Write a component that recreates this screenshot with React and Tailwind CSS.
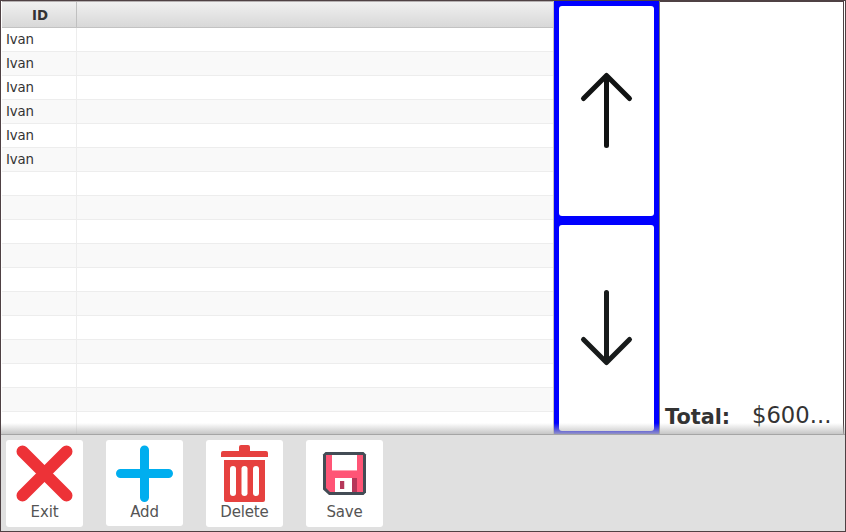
const rows = ['Ivan', 'Ivan', 'Ivan', 'Ivan', 'Ivan', 'Ivan', '', '', '', '', '', '', '', '', '', '', ''];

function Table() {
  return (
    <div className="flex h-full w-[553px] shrink-0 flex-col overflow-hidden border-r border-[#c0c0c0] pl-px">
      <div className="flex h-[27px] shrink-0 border-t border-b border-t-[#b5b0b1] border-b-[#c2c2c2] bg-gradient-to-b from-[#f0f0f0] to-[#d8d8d8] font-bold">
        <div className="flex w-[75px] items-center justify-center border-r border-[#c0c0c0] pt-[3px] pl-[2px] text-[13.33px]">ID</div>
        <div className="flex-1" />
      </div>
      {rows.map((name, i) => (
        <div key={i} className="flex h-6 shrink-0 border-b border-[#ededed] odd:bg-[#f9f9f9] even:bg-white">
          <div className="flex w-[75px] items-center border-r border-[#ededed] pl-1 text-[13.33px] tracking-[-0.2px]">{name}</div>
        </div>
      ))}
    </div>
  );
}

function Tool({ label, children, className = 'h-[87px]' }) {
  return (
    <button className={'flex w-[77px] flex-col items-center rounded-[3px] bg-white pt-[5px] text-[#555] ' + className}>
      {children}
      <span className="mt-px text-[15px] leading-[18px] tracking-[-0.15px]">{label}</span>
    </button>
  );
}

export default function App() {
  return (
    <div className="flex h-[532px] w-[846px] flex-col overflow-hidden border border-[#4f4144] bg-[#e0e0e0] font-['DejaVu_Sans',sans-serif] text-[#333]">
      <div className="relative flex h-[434px] shrink-0 border-b border-[#a5a5a5] bg-white">
        <Table />
        <div className="flex w-[106px] shrink-0 flex-col gap-[9px] border-r border-[#777] bg-[#0000ff] pt-[5px] pr-[5px] pb-[2px] pl-[5px]">
          <button className="h-[210px] w-[95px] shrink-0 rounded-[3px] bg-white">
            <svg width="95" height="210" fill="none" stroke="#111313" strokeWidth="5" strokeLinecap="round">
              <path d="M47.500 139.500V70M24.500 92.500L47.500 69.500L70.500 92.500" strokeLinejoin="round" />
            </svg>
          </button>
          <button className="h-[206px] w-[95px] shrink-0 rounded-[3px] bg-white">
            <svg width="95" height="206" fill="none" stroke="#181b1b" strokeWidth="5" strokeLinecap="round">
              <path d="M47.500 67.500V137M24.500 114.500L47.500 137.500L70.500 114.500" strokeLinejoin="round" />
            </svg>
          </button>
        </div>
        <div className="flex w-[184px] items-end border-t border-r border-[#4f4144] pb-[5px] pl-[5px]">
          <span className="w-[87px] text-[20.8px] leading-6 font-bold">Total:</span>
          <span className="text-[22.7px] leading-7">$600...</span>
        </div>
        <div className="w-px bg-white" />
        <div className="pointer-events-none absolute inset-x-0 bottom-0 h-[11px] bg-gradient-to-b from-transparent to-[#b8b8b8]/80" />
      </div>
      <div className="flex h-24 items-start gap-[23px] pt-[5px] pl-[5px]">
        <Tool label="Exit">
          <svg width="57" height="57" viewBox="0 0 57 57" stroke="#ed3237" strokeWidth="12" strokeLinecap="round">
            <path d="M6.500 6.500L50.500 50.500M50.500 6.500L6.500 50.500" />
          </svg>
        </Tool>
        <Tool label="Add" className="h-[86px]">
          <svg width="57" height="57" viewBox="0 0 57 57" stroke="#00aeef" strokeWidth="9" strokeLinecap="round">
            <path d="M28.500 5V52.500M4.500 28.500H52.500" />
          </svg>
        </Tool>
        <Tool label="Delete">
          <svg width="57" height="57" viewBox="0 0 57 57">
            <path fill="#e6413f" d="M5 12V8Q5 6 7 6H23V2Q23 0 25 0H32Q34 0 34 2V6H50Q52 6 52 8V12ZM8 15H49V55Q49 57 47 57H10Q8 57 8 55Z" />
            <g fill="white">
              <rect x="14" y="21" width="6" height="30" rx="3" />
              <rect x="25.500" y="21" width="6" height="30" rx="3" />
              <rect x="37" y="21" width="6" height="30" rx="3" />
            </g>
            <path stroke="#f3a09f" d="M25.500 23V49M31.500 23V49" />
          </svg>
        </Tool>
        <Tool label="Save">
          <svg width="57" height="57" viewBox="0 0 57 57">
            <path fill="#434c55" d="M9.500 7H47.500L50 9.500V47.500L47.500 50H13L7 44.500V9.500Z" />
            <path fill="#ff5576" d="M10 10H47V47H14L10 43Z" />
            <path fill="white" d="M16 10H41V25H16ZM19 33H36V47H19Z" />
            <path fill="#b53759" d="M36 33H41V47H36ZM24 36H28V44H24Z" />
            <path stroke="#ff9fb1" d="M16 25.500H41" />
            <path stroke="#ead0d8" d="M28.500 36V44" />
          </svg>
        </Tool>
      </div>
    </div>
  );
}
